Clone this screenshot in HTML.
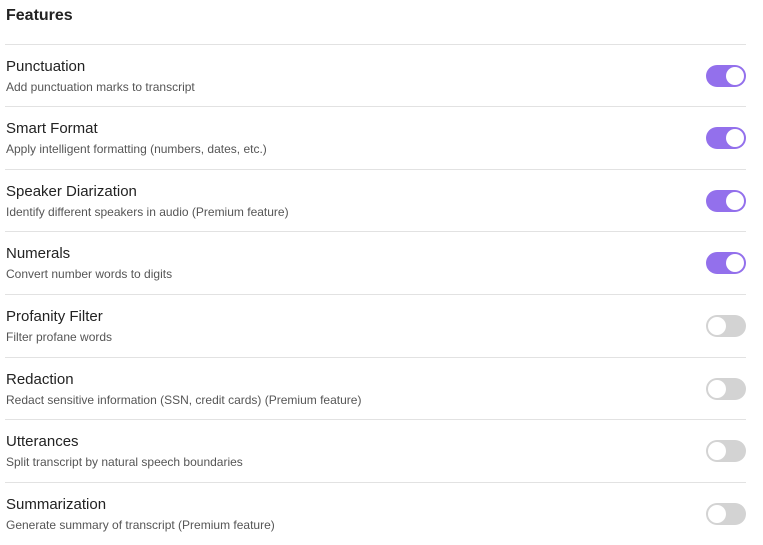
<!DOCTYPE html>
<html><head><meta charset="utf-8"><style>
body{margin:0;width:763px;height:545px;background:#fff;font-family:"Liberation Sans","Noto Sans CJK KR",sans-serif;position:relative;overflow:hidden}
h1{position:absolute;left:6px;top:7px;margin:0;font-size:16px;font-weight:bold;color:#222}
.row{position:absolute;left:5px;width:741px;height:62px;border-top:1px solid #e2e2e2}
.t{position:absolute;left:1px;top:13px;font-size:15px;color:#222;white-space:nowrap}
.d{position:absolute;left:1px;top:35px;font-size:12px;color:#555;white-space:nowrap}
.tg{position:absolute;right:0;top:20px;width:40px;height:22px;border-radius:11px;background:#d3d3d3}
.tg::after{content:"";position:absolute;left:2px;top:2px;width:18px;height:18px;border-radius:50%;background:#fff}
.tg.on{background:#9370ec}
.tg.on::after{left:20px}
</style></head><body>
<h1>Features</h1>
<div class="row" style="top:44px"><div class="t">Punctuation</div><div class="d">Add punctuation marks to transcript</div><div class="tg on"></div></div>
<div class="row" style="top:106px"><div class="t">Smart Format</div><div class="d">Apply intelligent formatting (numbers, dates, etc.)</div><div class="tg on"></div></div>
<div class="row" style="top:169px"><div class="t">Speaker Diarization</div><div class="d">Identify different speakers in audio (Premium feature)</div><div class="tg on"></div></div>
<div class="row" style="top:231px"><div class="t">Numerals</div><div class="d">Convert number words to digits</div><div class="tg on"></div></div>
<div class="row" style="top:294px"><div class="t">Profanity Filter</div><div class="d">Filter profane words</div><div class="tg"></div></div>
<div class="row" style="top:357px"><div class="t">Redaction</div><div class="d">Redact sensitive information (SSN, credit cards) (Premium feature)</div><div class="tg"></div></div>
<div class="row" style="top:419px"><div class="t">Utterances</div><div class="d">Split transcript by natural speech boundaries</div><div class="tg"></div></div>
<div class="row" style="top:482px"><div class="t">Summarization</div><div class="d">Generate summary of transcript (Premium feature)</div><div class="tg"></div></div>
</body></html>
